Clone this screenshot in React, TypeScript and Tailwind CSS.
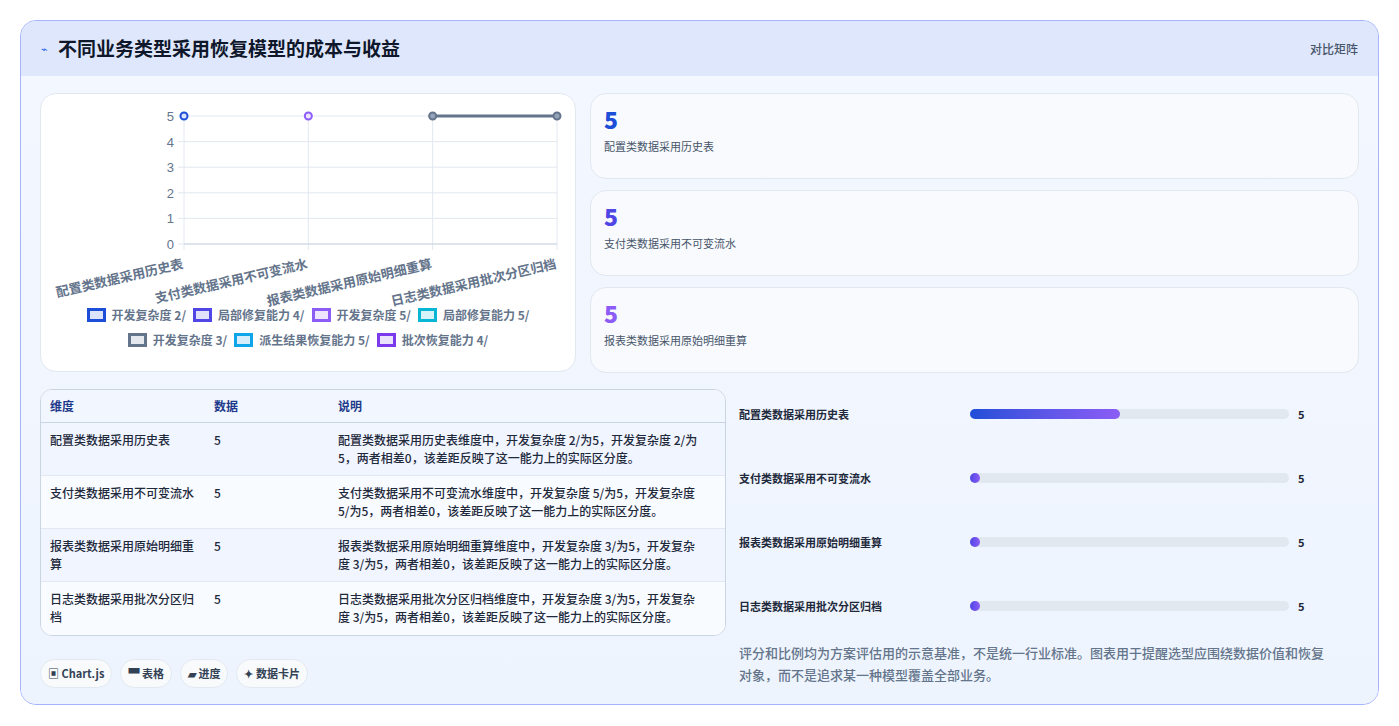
import React from "react";

const F = { fontFamily: '"Noto Sans CJK SC", "Noto Sans", sans-serif' };
const cats = ["配置类数据采用历史表", "支付类数据采用不可变流水", "报表类数据采用原始明细重算", "日志类数据采用批次分区归档"];
const desc = [
  "配置类数据采用历史表维度中，开发复杂度 2/为5，开发复杂度 2/为5，两者相差0，该差距反映了这一能力上的实际区分度。",
  "支付类数据采用不可变流水维度中，开发复杂度 5/为5，开发复杂度 5/为5，两者相差0，该差距反映了这一能力上的实际区分度。",
  "报表类数据采用原始明细重算维度中，开发复杂度 3/为5，开发复杂度 3/为5，两者相差0，该差距反映了这一能力上的实际区分度。",
  "日志类数据采用批次分区归档维度中，开发复杂度 3/为5，开发复杂度 3/为5，两者相差0，该差距反映了这一能力上的实际区分度。",
];
const legend1 = [
  ["#1d4ed8", "#dbe4fb", "开发复杂度 2/"],
  ["#4f46e5", "#e0e0fb", "局部修复能力 4/"],
  ["#8b5cf6", "#ede5fd", "开发复杂度 5/"],
  ["#06b6d4", "#d5f3f8", "局部修复能力 5/"],
];
const legend2 = [
  ["#64748b", "#e5e8ec", "开发复杂度 3/"],
  ["#0ea5e9", "#d6eefb", "派生结果恢复能力 5/"],
  ["#7c3aed", "#ebe2fc", "批次恢复能力 4/"],
];

function Chart() {
  const x0 = 143, x1 = 516, yTop = 22, yBot = 150;
  const xs = [0, 1, 2, 3].map((i) => x0 + ((x1 - x0) * i) / 3);
  const ys = [0, 1, 2, 3, 4, 5].map((v) => yBot - ((yBot - yTop) * v) / 5);
  return (
    <svg width="535" height="220" className="block">
      {ys.map((y, i) => (
        <g key={i}>
          <line x1={x0 - 6} x2={x1} y1={y} y2={y} stroke="#e2e8f0" />
          <text x={x0 - 10} y={y + 5} textAnchor="end" fontSize="13" fill="#64748b" fontFamily="Liberation Sans, sans-serif">{i}</text>
        </g>
      ))}
      {xs.map((x, i) => (
        <line key={i} x1={x} x2={x} y1={yTop} y2={yBot + 6} stroke="#e2e8f0" />
      ))}
      <line x1={x0} x2={x1} y1={yBot} y2={yBot} stroke="#cbd5e1" />
      <line x1={xs[2]} x2={xs[3]} y1={yTop} y2={yTop} stroke="#64748b" strokeWidth="3" />
      <circle cx={xs[0]} cy={yTop} r="3.5" fill="#dbe4fb" stroke="#1d4ed8" strokeWidth="2" />
      <circle cx={xs[1]} cy={yTop} r="3.5" fill="#ede5fd" stroke="#8b5cf6" strokeWidth="2" />
      <circle cx={xs[2]} cy={yTop} r="3.5" fill="#94a3b8" stroke="#64748b" strokeWidth="2" />
      <circle cx={xs[3]} cy={yTop} r="3.5" fill="#94a3b8" stroke="#64748b" strokeWidth="2" />
      {cats.map((c, i) => (
        <text key={i} x={xs[i]} y={yBot + 24} textAnchor="end" fontSize="13" fontWeight="700" fill="#64748b"
          transform={`rotate(-13 ${xs[i]} ${yBot + 24})`} style={F}>{c}</text>
      ))}
    </svg>
  );
}

function Leg({ items }: { items: string[][] }) {
  return (
    <div className="flex justify-center gap-[7px]">
      {items.map(([c, b, t], i) => (
        <div key={i} className="flex items-center gap-[6px] text-[12px] font-bold text-[#64748b]">
          <span className="inline-block w-[19px] h-[14px] border-[3px]" style={{ borderColor: c, background: b }} />
          {t}
        </div>
      ))}
    </div>
  );
}

export default function App() {
  const statColors = ["text-[#1d4ed8]", "text-[#4f46e5]", "text-[#8b5cf6]"];
  return (
    <div className="w-[1399px] h-[726px] bg-white p-[20px] pb-[21px]" style={F}>
      <div className="h-[685px] rounded-[16px] border border-[#a5b4fc] overflow-hidden bg-[#eef4fe] flex flex-col">
        <div className="h-[55px] bg-[#dfe7fd] flex items-center justify-between px-[20px] shrink-0">
          <div className="flex items-center gap-[10px]">
            <span className="text-[#2563eb] text-[11px]">⌁</span>
            <span className="text-[19px] font-bold text-[#0f172a]">不同业务类型采用恢复模型的成本与收益</span>
          </div>
          <span className="text-[12px] text-[#475569] font-medium">对比矩阵</span>
        </div>
        <div className="flex-1 px-[19px] pt-[17px] bg-gradient-to-b from-[#f3f7ff] to-[#eef4fe]">
          <div className="flex gap-[14px]">
            <div className="w-[536px] h-[279px] bg-white rounded-[16px] border border-[#e2e8f0] flex flex-col">
              <Chart />
              <div className="flex flex-col gap-[7px] -mt-[8px]">
                <Leg items={legend1} />
                <Leg items={legend2} />
              </div>
            </div>
            <div className="flex-1 flex flex-col gap-[11px]">
              {cats.slice(0, 3).map((c, i) => (
                <div key={i} className="h-[86px] bg-[#f8fafe] rounded-[16px] border border-[#e2e8f0] px-[13px] pt-[10px]">
                  <div className={`text-[23px] font-black leading-[30px] ${statColors[i]}`}>5</div>
                  <div className="text-[11px] text-[#475569] mt-[4px]">{c}</div>
                </div>
              ))}
            </div>
          </div>
          <div className="flex gap-[13px] mt-[16px]">
            <div className="w-[686px]">
              <div className="rounded-[12px] border border-[#cbd5e1] overflow-hidden bg-white text-[12px]">
                <div className="grid grid-cols-[164px_124px_1fr] h-[33px] items-center px-[9px] bg-[#f1f6ff] border-b border-[#cbd5e1] font-bold text-[#1e3a8a]">
                  <span>维度</span><span>数据</span><span>说明</span>
                </div>
                {cats.map((c, i) => (
                  <div key={i} className={`grid grid-cols-[164px_124px_1fr] h-[53px] items-start pt-[8px] px-[9px] text-[#1e293b] font-medium leading-[18px] ${i % 2 === 0 ? "bg-[#f0f5ff]" : "bg-[#f8fbff]"} ${i < 3 ? "border-b border-[#e2e8f0]" : ""}`}>
                    <span className="pr-[12px]">{c}</span>
                    <span>5</span>
                    <span className="pr-[12px]">{desc[i]}</span>
                  </div>
                ))}
              </div>
              <div className="flex gap-[8px] mt-[23px]">
                {["▣ Chart.js", "▀ 表格", "▰ 进度", "✦ 数据卡片"].map((t, i) => (
                  <span key={i} className="h-[29px] px-[7px] rounded-full bg-[#f8fafc] border border-[#e2e8f0] flex items-center text-[11px] font-bold text-[#334155]">{t}</span>
                ))}
              </div>
            </div>
            <div className="flex-1 -mt-[7px]">
              <div className="flex flex-col">
                {cats.map((c, i) => (
                  <div key={i} className="h-[64px] flex items-center text-[11px] font-bold text-[#1e293b]">
                    <span className="w-[231px]">{c}</span>
                    <div className="w-[319px] h-[10px] rounded-full bg-[#e2e8f0]">
                      <div className={`h-full rounded-full bg-gradient-to-r from-[#1d4ed8] to-[#8b5cf6] ${i === 0 ? "w-[150px]" : "w-[10px] from-[#4f46e5]"}`} />
                    </div>
                    <span className="ml-[9px]">5</span>
                  </div>
                ))}
              </div>
              <p className="mt-[4px] text-[13px] leading-[22px] text-[#64748b] font-medium pr-[24px]">评分和比例均为方案评估用的示意基准，不是统一行业标准。图表用于提醒选型应围绕数据价值和恢复对象，而不是追求某一种模型覆盖全部业务。</p>
            </div>
          </div>
        </div>
      </div>
    </div>
  );
}
